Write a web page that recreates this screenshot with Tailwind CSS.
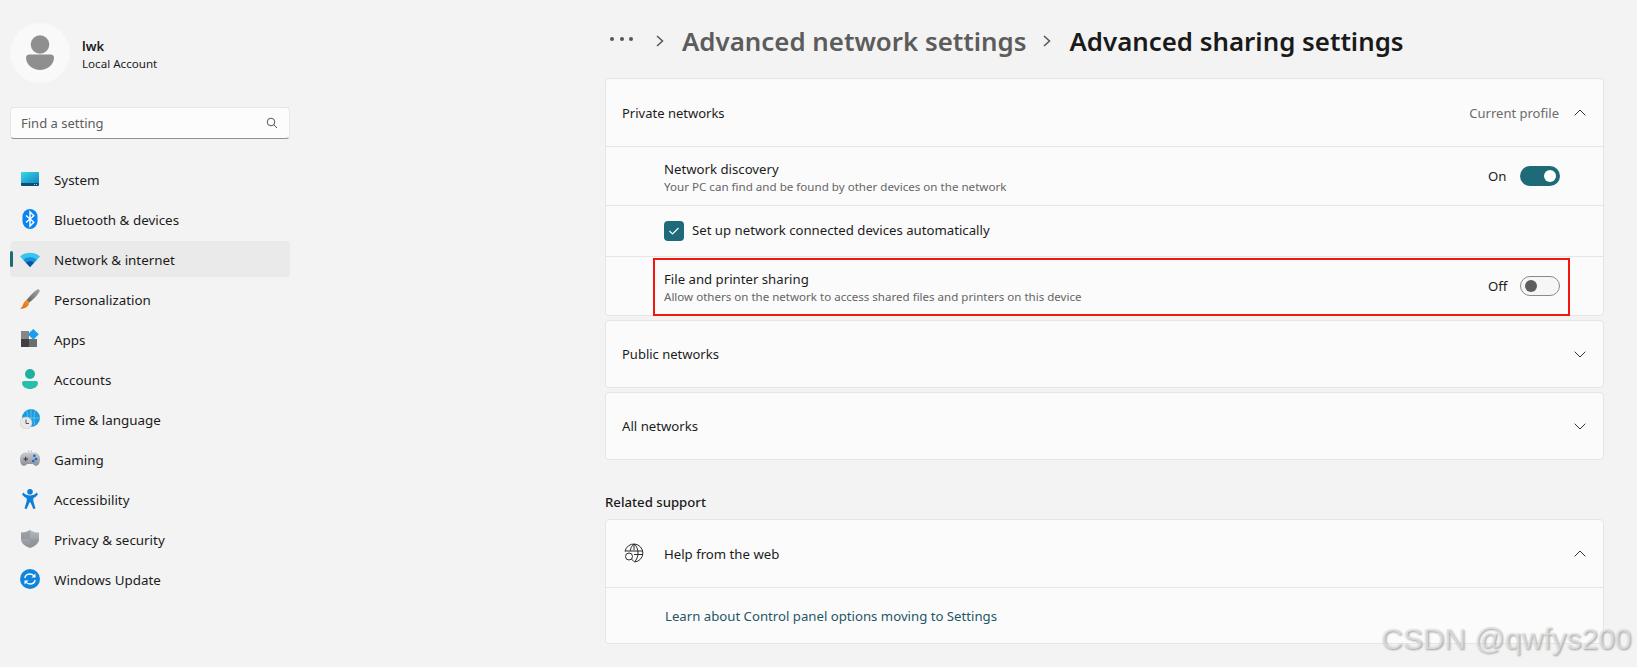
<!DOCTYPE html>
<html lang="en">
<head>
    <meta charset="UTF-8">
    <title>Settings</title>
    <script src="https://cdn.jsdelivr.net/npm/@tailwindcss/browser@4"></script>
</head>
<body class="bg-[#f3f3f3] font-['Noto_Sans',sans-serif] text-[#1b1b1b] overflow-hidden">
<div class="relative flex w-[1637px] h-[667px]">

    <!-- Sidebar -->
    <aside class="w-[605px] shrink-0 pl-[10px] pt-[23px]">
        <div class="flex items-center h-[60px]">
            <div class="w-[60px] h-[60px] rounded-full bg-[#f9f9f9] flex items-center justify-center">
                <svg width="30" height="36" viewBox="0 0 30 36"><circle cx="15" cy="9.500" r="9.300" fill="#8f8f8f"/><path d="M1 22.500C1 20.500 2.500 19.500 4.500 19.500H25.500C27.500 19.500 29 20.500 29 22.500C29 30 22 35 15 35S1 30 1 22.500Z" fill="#8f8f8f"/></svg>
            </div>
            <div class="ml-[12px] mt-[2px]">
                <div class="text-[13px] leading-[18px] font-semibold">lwk</div>
                <div class="text-[11.600px] leading-[17px]">Local Account</div>
            </div>
        </div>

        <div class="mt-[24px] w-[280px] h-[32px] rounded-[4px] bg-[#fcfcfc] border border-[#e6e6e6] border-b-[#8f8f8f] flex items-center justify-between pl-[10px] pr-[11px] text-[13px] text-[#5d5d5d]">
            <span class="pt-[2px]">Find a setting</span>
            <svg width="12" height="12" viewBox="0 0 12 12" fill="none" stroke="#555" stroke-width="1"><circle cx="5" cy="5" r="3.800"/><path d="M7.800 7.800L11 11"/></svg>
        </div>

        <nav class="mt-[20px] w-[280px] text-[13.400px]">
            <div class="h-[40px] flex items-center">
                <span class="w-[10px]"></span>
                <svg class="w-[20px] h-[20px]" viewBox="0 0 20 20"><defs><linearGradient id="sys" x1="0" y1="0" x2="1" y2="1"><stop offset="0" stop-color="#35dbe6"/><stop offset="1" stop-color="#1484c0"/></linearGradient></defs><path d="M1 4A1 1 0 0 1 2 3H18A1 1 0 0 1 19 4V14H1Z" fill="url(#sys)"/><path d="M1 14H19V16A1 1 0 0 1 18 17H2A1 1 0 0 1 1 16Z" fill="#0f4c75"/><path d="M14 15.500H15M16 15.500H17" stroke="#bfe" stroke-width=".8"/></svg>
                <span class="ml-[14px] pt-[2px]">System</span>
            </div>
            <div class="h-[40px] flex items-center">
                <span class="w-[10px]"></span>
                <svg class="w-[20px] h-[20px]" viewBox="0 0 20 20"><rect x="2.500" y="0" width="15" height="20" rx="7.500" fill="#0a84f0"/><path d="M6 6.500L13.800 13.300L10 17V3L13.800 6.700L6 13.500" fill="none" stroke="#fff" stroke-width="1.400"/></svg>
                <span class="ml-[14px] pt-[2px]">Bluetooth &amp; devices</span>
            </div>
            <div class="relative h-[36px] my-[2px] rounded-[4px] bg-[#eaeaea] flex items-center">
                <span class="absolute left-0 top-[10px] w-[3px] h-[16px] rounded-full bg-[#1f6a78]"></span>
                <span class="w-[10px]"></span>
                <svg class="w-[20px] h-[20px]" viewBox="0 0 20 20"><path d="M0 7.500C5.500 2.500 14.500 2.500 20 7.500L10 18Z" fill="#38c5ee"/><path d="M3.200 10.800C7 7.500 13 7.500 16.800 10.800L10 18Z" fill="#1a8fdc"/><path d="M6 13.600C8.500 11.800 11.500 11.800 14 13.600L10 18Z" fill="#0b4fa0"/></svg>
                <span class="ml-[14px] pt-[2px]">Network &amp; internet</span>
            </div>
            <div class="h-[40px] flex items-center">
                <span class="w-[10px]"></span>
                <svg class="w-[20px] h-[20px]" viewBox="0 0 20 20"><defs><linearGradient id="brush" x1="1" y1="0" x2="0" y2="1"><stop offset="0" stop-color="#a8a8a8"/><stop offset="1" stop-color="#5f5f5f"/></linearGradient><linearGradient id="tip" x1="1" y1="0" x2="0" y2="1"><stop offset="0" stop-color="#f59a1e"/><stop offset="1" stop-color="#e85c0d"/></linearGradient></defs><path d="M17.500 0.300C18.800 -.300 20.200 1 19.700 2.300C17.500 6.500 13 11 9 13.800L6.300 11.300C9.500 7.500 13.500 3 17.500 0.300Z" fill="url(#brush)"/><path d="M5.800 11.500C8 11 9.500 13 9 15C8 18 4 20.300 0 19.500C2.500 18.500 3 16 3.500 14.500C4 13 5 12 5.800 11.500Z" fill="url(#tip)"/></svg>
                <span class="ml-[14px] pt-[2px]">Personalization</span>
            </div>
            <div class="h-[40px] flex items-center">
                <span class="w-[10px]"></span>
                <svg class="w-[20px] h-[20px]" viewBox="0 0 20 20"><rect x="1" y="2" width="8" height="8" fill="#85878b"/><rect x="1" y="10" width="8" height="8" fill="#3f4044"/><rect x="9" y="10" width="8" height="8" fill="#6b6d71"/><path d="M13.300 0L18.800 5.300L13.300 10.800L7.800 5.300Z" fill="#1e9cf0"/></svg>
                <span class="ml-[14px] pt-[2px]">Apps</span>
            </div>
            <div class="h-[40px] flex items-center">
                <span class="w-[10px]"></span>
                <svg class="w-[20px] h-[20px]" viewBox="0 0 20 20"><circle cx="10" cy="5" r="5" fill="#1fb09f"/><path d="M2 14A2 2 0 0 1 4 12H16A2 2 0 0 1 18 14C18 17.800 14 20 10 20S2 17.800 2 14Z" fill="#27bfa9"/></svg>
                <span class="ml-[14px] pt-[2px]">Accounts</span>
            </div>
            <div class="h-[40px] flex items-center">
                <span class="w-[10px]"></span>
                <svg class="w-[20px] h-[20px]" viewBox="0 0 20 20"><circle cx="11" cy="9" r="9" fill="#1c9bdc"/><path d="M11 0V18M2 9H20M6.500 1.500C8.500 6 8.500 13 6.500 17M15.500 1.500C13.500 6 13.500 13 15.500 17" stroke="#7fd6f2" stroke-width=".6" fill="none"/><circle cx="6" cy="14" r="6" fill="#e8e8e8" stroke="#c4c4c4" stroke-width=".5"/><path d="M6 10.500V14.500H9" fill="none" stroke="#444" stroke-width=".9"/></svg>
                <span class="ml-[14px] pt-[2px]">Time &amp; language</span>
            </div>
            <div class="h-[40px] flex items-center">
                <span class="w-[10px]"></span>
                <svg class="w-[20px] h-[20px]" viewBox="0 0 20 20"><defs><linearGradient id="pad" x1="0" y1="0" x2="0" y2="1"><stop offset="0" stop-color="#c8cbd0"/><stop offset="1" stop-color="#8b8f96"/></linearGradient></defs><path d="M5.500 3.500H14.500C17.800 3.500 20 6.500 20 10C20 14 18.500 16.800 16 16.800C14 16.800 13.500 15 12.500 15H7.500C6.500 15 6 16.800 4 16.800C1.500 16.800 0 14 0 10C0 6.500 2.200 3.500 5.500 3.500Z" fill="url(#pad)"/><path d="M3.500 10H8M5.700 7.800V12.200" stroke="#333" stroke-width="1"/><circle cx="14.300" cy="6.800" r="1.300" fill="#0f6cc4"/><circle cx="16" cy="10" r="1.300" fill="#0f6cc4"/><circle cx="13.300" cy="12" r="1.300" fill="#0f6cc4"/><path d="M8.300 2.200H9.100M10.900 2.200H11.700" stroke="#666" stroke-width=".8"/></svg>
                <span class="ml-[14px] pt-[2px]">Gaming</span>
            </div>
            <div class="h-[40px] flex items-center">
                <span class="w-[10px]"></span>
                <svg class="w-[20px] h-[20px]" viewBox="0 0 20 20"><circle cx="10" cy="2.800" r="2.800" fill="#0c7fd8"/><path d="M3.500 3.500C5 5.800 7.500 6.500 10 6.500S15 5.800 16.500 3.500L18 5.200C16.800 7 15 8.500 13.300 9.200V12L15.500 19.500L13.300 20L10.500 13.500H9.500L6.700 20L4.500 19.500L6.700 12V9.200C5 8.500 3.200 7 2 5.200Z" fill="#0c7fd8"/></svg>
                <span class="ml-[14px] pt-[2px]">Accessibility</span>
            </div>
            <div class="h-[40px] flex items-center">
                <span class="w-[10px]"></span>
                <svg class="w-[20px] h-[20px]" viewBox="0 0 20 20"><defs><linearGradient id="shield" x1="0" y1="0" x2="0" y2="1"><stop offset="0" stop-color="#b4b8bc"/><stop offset="1" stop-color="#8d9197"/></linearGradient></defs><path d="M10 1C13 3 15.500 3.500 19 3.500V10C19 14 15 17.500 10 19C5 17.500 1 14 1 10V3.500C4.500 3.500 7 3 10 1Z" fill="url(#shield)"/><path d="M10 1C7 3 4.500 3.500 1 3.500V10H10ZM10 10H19C19 14 15 17.500 10 19Z" fill="#8f9399" fill-opacity=".6"/></svg>
                <span class="ml-[14px] pt-[2px]">Privacy &amp; security</span>
            </div>
            <div class="h-[40px] flex items-center">
                <span class="w-[10px]"></span>
                <svg class="w-[20px] h-[20px]" viewBox="0 0 20 20"><circle cx="10" cy="10" r="10" fill="#0f86dc"/><path d="M4.800 9C5.300 6.500 7.500 5 10 5C12 5 13.500 6 14.500 7.500M15.200 11C14.700 13.500 12.500 15 10 15C8 15 6.500 14 5.500 12.500" fill="none" stroke="#fff" stroke-width="1.300"/><path d="M15.500 4.500V8.500H11.500ZM4.500 15.500V11.500H8.500Z" fill="#fff"/></svg>
                <span class="ml-[14px] pt-[2px]">Windows Update</span>
            </div>
        </nav>
    </aside>

    <!-- Main -->
    <main class="w-[999px]">
        <div class="h-[78px] flex items-center pt-[4px] text-[25.850px] font-semibold">
            <div class="ml-[5px] w-[23px] flex justify-between -mt-[4px]">
                <i class="w-[4px] h-[4px] rounded-full bg-[#555]"></i><i class="w-[4px] h-[4px] rounded-full bg-[#555]"></i><i class="w-[4px] h-[4px] rounded-full bg-[#555]"></i>
            </div>
            <svg class="ml-[23px]" width="8" height="12" viewBox="0 0 8 12" fill="none" stroke="#555" stroke-width="1.500"><path d="M1 1L6.500 6L1 11"/></svg>
            <span class="ml-[18px] text-[#5c5c5c]">Advanced network settings</span>
            <svg class="ml-[17px]" width="8" height="12" viewBox="0 0 8 12" fill="none" stroke="#555" stroke-width="1.500"><path d="M1 1L6.500 6L1 11"/></svg>
            <span class="ml-[18px] text-[#1a1a1a]">Advanced sharing settings</span>
        </div>

        <section class="rounded-[4px] border border-[#e5e5e5] bg-[#fbfbfb] text-[13.200px]">
            <div class="h-[67px] flex items-center justify-between pl-[16px] pr-[17px] text-[13px]">
                <span class="pt-[2px]">Private networks</span>
                <div class="flex items-center">
                    <span class="pt-[2px] text-[#6b6b6b]">Current profile</span>
                    <svg class="ml-[15px]" width="12" height="7" viewBox="0 0 12 7" fill="none" stroke="#333" stroke-width="1"><path d="M.700 6.300L6 1L11.300 6.300"/></svg>
                </div>
            </div>
            <div class="h-[59px] border-t border-[#e5e5e5] flex items-center justify-between pl-[58px] pr-[43px]">
                <div class="pt-[2px]">
                    <div class="leading-[18px]">Network discovery</div>
                    <div class="text-[11.600px] leading-[17px] text-[#666]">Your PC can find and be found by other devices on the network</div>
                </div>
                <div class="flex items-center">
                    <span class="w-[32px] pt-[2px]">On</span>
                    <div class="w-[40px] h-[20px] rounded-full bg-[#1f6a78] flex items-center justify-end pr-[4px]"><i class="w-[12px] h-[12px] rounded-full bg-white"></i></div>
                </div>
            </div>
            <div class="h-[51px] border-t border-[#e5e5e5] flex items-center pl-[58px]">
                <div class="w-[20px] h-[20px] rounded-[4px] bg-[#1f6a78] flex items-center justify-center">
                    <svg width="12" height="10" viewBox="0 0 12 10" fill="none" stroke="#fff" stroke-width="1.100"><path d="M1.500 5L4.500 8L10.500 2"/></svg>
                </div>
                <span class="ml-[8px] pb-[1px]">Set up network connected devices automatically</span>
            </div>
            <div class="h-[59px] border-t border-[#e5e5e5] flex items-center justify-between pl-[58px] pr-[43px]">
                <div class="pt-[2px]">
                    <div class="leading-[18px]">File and printer sharing</div>
                    <div class="text-[11.550px] leading-[17px] text-[#666]">Allow others on the network to access shared files and printers on this device</div>
                </div>
                <div class="flex items-center">
                    <span class="w-[32px] pt-[2px]">Off</span>
                    <div class="w-[40px] h-[20px] rounded-full border border-[#8a8a8a] bg-[#f6f6f6] flex items-center pl-[4px]"><i class="w-[12px] h-[12px] rounded-full bg-[#5d5d5d]"></i></div>
                </div>
            </div>
        </section>

        <section class="mt-[4px] h-[68px] rounded-[4px] border border-[#e5e5e5] bg-[#fbfbfb] text-[13px] flex items-center justify-between pl-[16px] pr-[17px]">
            <span class="pt-[2px]">Public networks</span>
            <svg width="12" height="7" viewBox="0 0 12 7" fill="none" stroke="#333" stroke-width="1"><path d="M.700 .700L6 6L11.300 .700"/></svg>
        </section>
        <section class="mt-[4px] h-[68px] rounded-[4px] border border-[#e5e5e5] bg-[#fbfbfb] text-[13.200px] flex items-center justify-between pl-[16px] pr-[17px]">
            <span class="pt-[2px]">All networks</span>
            <svg width="12" height="7" viewBox="0 0 12 7" fill="none" stroke="#333" stroke-width="1"><path d="M.700 .700L6 6L11.300 .700"/></svg>
        </section>

        <h3 class="mt-[32px] h-[27px] text-[13.200px] leading-[20px] font-medium">Related support</h3>

        <section class="rounded-[4px] border border-[#e5e5e5] bg-[#fbfbfb] text-[13.200px]">
            <div class="h-[67px] flex items-center justify-between pl-[18px] pr-[17px]">
                <div class="flex items-center">
                    <svg width="20" height="20" viewBox="0 0 20 20" fill="none" stroke="#2b2b2b" stroke-width="1"><path d="M1 8.500A9 9 0 1 1 10.500 19M1.200 8H18.800M10 1V7M10 1C7.500 3 6.500 5.500 6.300 8M10 1C12.500 3 14 6 14 10C14 13 13 16.500 10.500 19M10 11.500H19"/><circle cx="5" cy="13.500" r="3.500"/><path d="M7.500 16L10 18.700"/></svg>
                    <span class="ml-[20px] pt-[2px]">Help from the web</span>
                </div>
                <svg width="12" height="7" viewBox="0 0 12 7" fill="none" stroke="#333" stroke-width="1"><path d="M.700 6.300L6 1L11.300 6.300"/></svg>
            </div>
            <div class="h-[56px] border-t border-[#e5e5e5] flex items-center pl-[59px] pt-[2px] text-[#1f5667]">Learn about Control panel options moving to Settings</div>
        </section>
    </main>

    <!-- Red annotation over the row -->
    <div class="absolute left-[653px] top-[258px] w-[917px] h-[58px] border-2 border-[#f5150f]"></div>
    <!-- Watermark -->
    <div class="absolute left-[1381px] top-[621px] text-[30px] leading-[36px] font-['Liberation_Sans',sans-serif] text-[#e6e6e6]/70 [text-shadow:1px_1px_2px_#a0a0a0]">CSDN @qwfys200</div>
</div>
</body>
</html>
